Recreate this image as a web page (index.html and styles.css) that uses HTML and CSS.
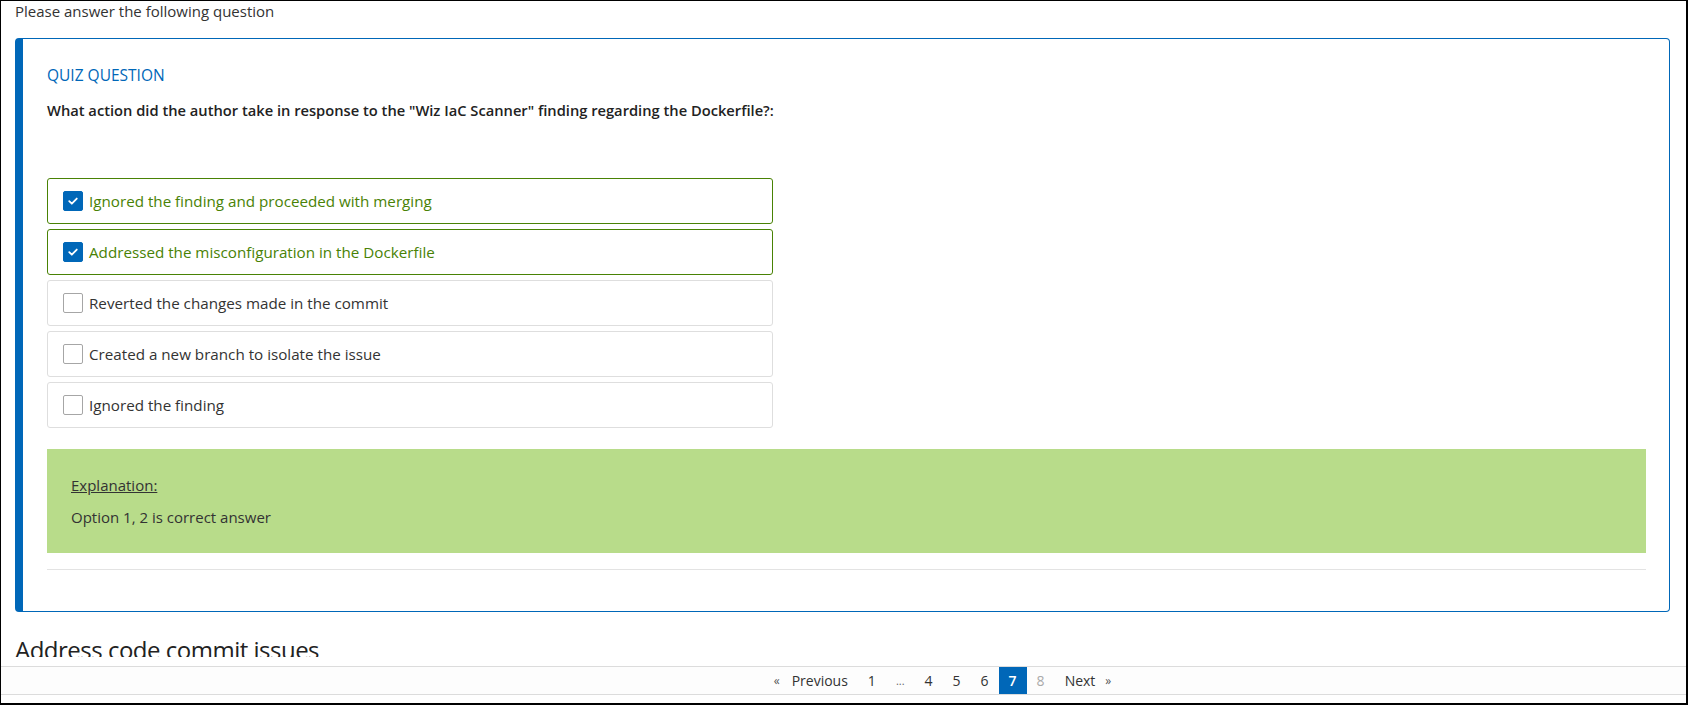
FILE: index.html
```html
<!DOCTYPE html>
<html lang="en">
<head>
<meta charset="utf-8">
<title>Quiz</title>
<link rel="stylesheet" href="styles.css">
</head>
<body>
<div class="frame">
  <div class="content">
    <div class="intro">Please answer the following question</div>
    <section class="card">
      <div class="quiz-label">QUIZ QUESTION</div>
      <p class="question">What action did the author take in response to the "Wiz IaC Scanner" finding regarding the Dockerfile?:</p>
      <ul class="options">
        <li class="option correct"><span class="box checked"><svg viewBox="0 0 20 20" width="20" height="20"><path d="M5.8 10.2 L8.7 13 L14.2 7.3" fill="none" stroke="#fff" stroke-width="2" stroke-linecap="round" stroke-linejoin="round"/></svg></span><span class="label">Ignored the finding and proceeded with merging</span></li>
        <li class="option correct"><span class="box checked"><svg viewBox="0 0 20 20" width="20" height="20"><path d="M5.8 10.2 L8.7 13 L14.2 7.3" fill="none" stroke="#fff" stroke-width="2" stroke-linecap="round" stroke-linejoin="round"/></svg></span><span class="label">Addressed the misconfiguration in the Dockerfile</span></li>
        <li class="option"><span class="box"></span><span class="label">Reverted the changes made in the commit</span></li>
        <li class="option"><span class="box"></span><span class="label">Created a new branch to isolate the issue</span></li>
        <li class="option"><span class="box"></span><span class="label">Ignored the finding</span></li>
      </ul>
      <div class="explanation">
        <p class="exp-title">Explanation:</p>
        <p class="exp-text">Option 1, 2 is correct answer</p>
      </div>
      <hr class="divider">
    </section>
    <h2 class="next-title">Address code commit issues</h2>
  </div>
  <nav class="footer">
    <ul class="pager">
      <li class="pg prev"><span class="arrow">«</span>Previous</li>
      <li class="pg">1</li>
      <li class="pg dots">...</li>
      <li class="pg">4</li>
      <li class="pg">5</li>
      <li class="pg">6</li>
      <li class="pg active">7</li>
      <li class="pg disabled">8</li>
      <li class="pg next">Next<span class="arrow">»</span></li>
    </ul>
  </nav>
</div>
</body>
</html>
```

FILE: styles.css
```css
html, body {
  margin: 0;
  padding: 0;
  background: #fff;
}

.frame {
  width: 1688px;
  height: 705px;
  box-sizing: border-box;
  border: 1px solid #000;
  border-right-width: 2px;
  border-bottom-width: 2px;
  display: flex;
  flex-direction: column;
  overflow: hidden;
  font-family: "Open Sans", "Noto Sans", sans-serif;
  color: #333;
}

.content {
  height: 656px;
  flex: 0 0 656px;
  overflow: hidden;
  padding: 0 16px 0 14px;
}

.intro {
  font-size: 15px;
  line-height: 20px;
  color: #333;
}

.card {
  margin-top: 17px;
  border: 1px solid #0067b8;
  border-left: 8px solid #0067b8;
  border-radius: 4px;
  padding: 26px 23px 41px 24px;
}

.quiz-label {
  font-size: 15.5px;
  line-height: 20px;
  color: #0067b8;
}

.question {
  margin: 15px 0 0;
  font-size: 14.7px;
  line-height: 20px;
  font-weight: 600;
  color: #222;
}

.options {
  list-style: none;
  margin: 58px 0 0;
  padding: 0;
  width: 726px;
}

.option {
  box-sizing: border-box;
  height: 46px;
  margin-bottom: 5px;
  border: 1px solid #dedede;
  border-radius: 3px;
  display: flex;
  align-items: center;
  padding-left: 15px;
  font-size: 15.2px;
  color: #333;
}

.option.correct {
  border-color: #498205;
  color: #498205;
}

.box {
  box-sizing: border-box;
  width: 20px;
  height: 20px;
  border: 1px solid #a6a6a6;
  border-radius: 2px;
  margin-right: 6px;
  display: flex;
  align-items: center;
  justify-content: center;
  background: #fff;
}

.box.checked {
  background: #0067b8;
  border-color: #0067b8;
}

.box svg {
  display: block;
}

.explanation {
  margin-top: 21px;
  background: #b8dc8a;
  padding: 26px 24px;
  color: #333;
  font-size: 15px;
  line-height: 20px;
}

.explanation p {
  margin: 0;
}

.exp-title {
  text-decoration: underline;
  margin-bottom: 12px !important;
}

.divider {
  margin: 16px 0 0;
  border: 0;
  border-top: 1px solid #e3e3e3;
  height: 0;
}

.next-title {
  margin: 22px 0 0;
  font-size: 24px;
  line-height: 32px;
  font-weight: 400;
  letter-spacing: -0.5px;
  color: #222;
}

.footer {
  margin-top: 9px;
  height: 29px;
  box-sizing: border-box;
  border-top: 1px solid #dcdcdc;
  border-bottom: 1px solid #dcdcdc;
  background: #fdfdfd;
  display: flex;
  justify-content: center;
  padding-left: 198px;
}

.pager {
  list-style: none;
  margin: 0;
  padding: 0;
  display: flex;
  align-items: stretch;
  font-size: 14px;
}

.pg {
  display: flex;
  align-items: center;
  padding: 0 10px;
  color: #333;
}

.pg.dots {
  font-size: 11px;
  color: #666;
}

.pg.active {
  background: #0067b8;
  color: #fff;
  font-weight: 600;
}

.pg.disabled {
  color: #aaa;
}

.arrow {
  font-size: 12px;
  color: #555;
}

.prev .arrow {
  margin-right: 12px;
}

.next .arrow {
  margin-left: 10px;
}
```
